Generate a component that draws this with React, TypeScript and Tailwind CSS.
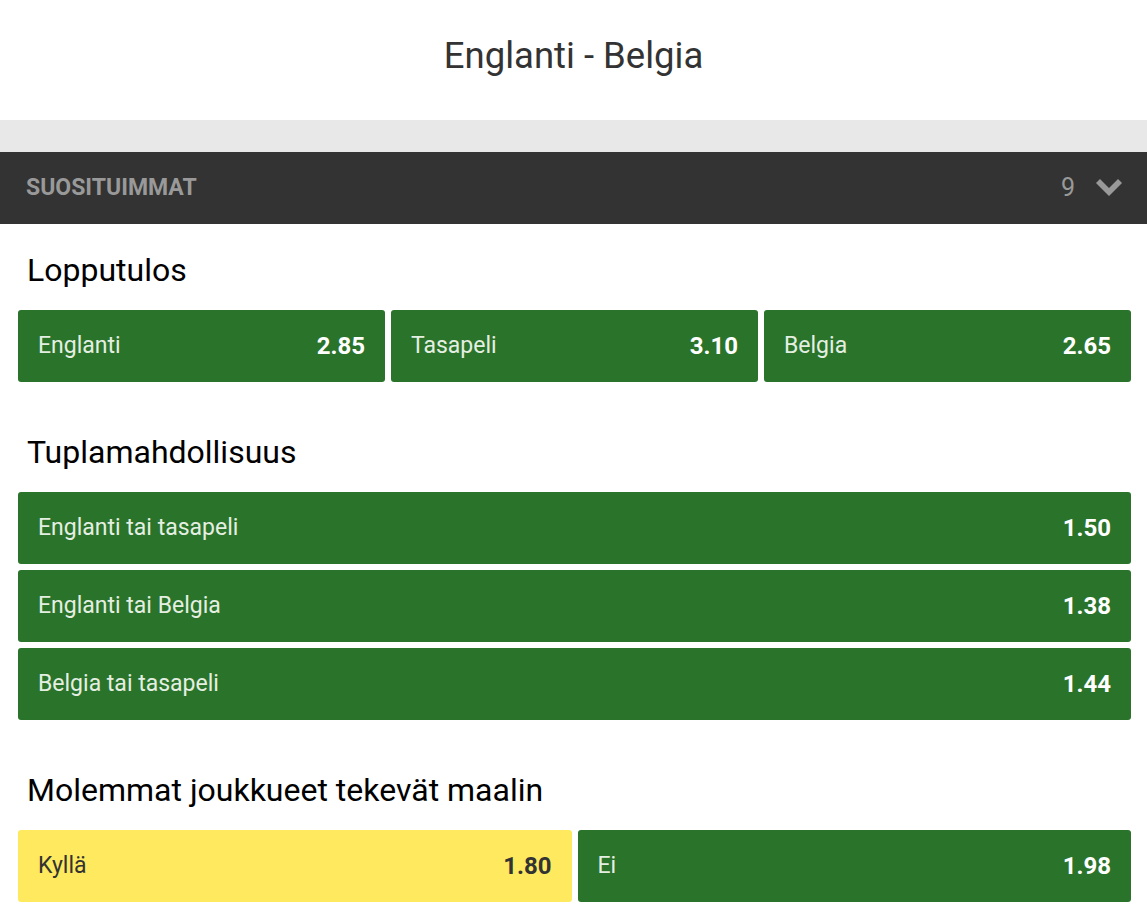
import React from "react";

const Odd = ({ label, odd, yellow = false }: { label: string; odd: string; yellow?: boolean }) => (
  <div
    className={`flex h-[72px] min-w-0 flex-1 basis-0 items-center justify-between rounded-[3px] px-[20px] ${
      yellow ? "bg-[#ffea5f] text-[#333333]" : "bg-[#2a732a]"
    }`}
  >
    <span className={`text-[23px] ${yellow ? "text-[#333333]" : "text-[#e4efe2]"}`}>{label}</span>
    <span className={`text-[24px] font-bold ${yellow ? "text-[#333333]" : "text-white"}`}>{odd}</span>
  </div>
);

const Row = ({ label, odd }: { label: string; odd: string }) => (
  <div className="flex h-[72px] shrink-0 items-center justify-between rounded-[3px] bg-[#2a732a] px-[20px]">
    <span className="text-[23px] text-[#e4efe2]">{label}</span>
    <span className="text-[24px] font-bold text-white">{odd}</span>
  </div>
);

const Heading = ({ children }: { children: React.ReactNode }) => (
  <h2 className="pl-[9px] pt-[30px] pb-[24px] text-[32px] leading-[32px] text-black">{children}</h2>
);

export default function App() {
  return (
    <div className="min-h-[919px] bg-white font-['Roboto',sans-serif]">
      <div className="flex h-[120px] items-center justify-center pb-[8px]">
        <h1 className="text-[36.5px] text-[#333333]">Englanti - Belgia</h1>
      </div>
      <div className="h-[32px] bg-[#e8e8e8]" />
      <div className="flex h-[72px] items-center justify-between bg-[#333333] pl-[26px] pr-[24px]">
        <span className="text-[23px] font-bold uppercase text-[#999999]">Suosituimmat</span>
        <div className="flex items-center gap-[20px]">
          <span className="text-[25px] text-[#999999]">9</span>
          <svg width="28" height="18" viewBox="0 0 28 18" className="text-[#999999]">
            <path d="M1 4 L5 0 L14 9 L23 0 L27 4 L14 17 Z" fill="currentColor" />
          </svg>
        </div>
      </div>
      <div className="pl-[18px] pr-[16px]">
        <section>
          <Heading>Lopputulos</Heading>
          <div className="flex gap-[6px]">
            <Odd label="Englanti" odd="2.85" />
            <Odd label="Tasapeli" odd="3.10" />
            <Odd label="Belgia" odd="2.65" />
          </div>
        </section>
        <section className="mt-[24px]">
          <Heading>Tuplamahdollisuus</Heading>
          <div className="flex flex-col gap-[6px]">
            <Row label="Englanti tai tasapeli" odd="1.50" />
            <Row label="Englanti tai Belgia" odd="1.38" />
            <Row label="Belgia tai tasapeli" odd="1.44" />
          </div>
        </section>
        <section className="mt-[24px]">
          <Heading>Molemmat joukkueet tekevät maalin</Heading>
          <div className="flex gap-[6px]">
            <Odd label="Kyllä" odd="1.80" yellow />
            <Odd label="Ei" odd="1.98" />
          </div>
        </section>
      </div>
    </div>
  );
}
